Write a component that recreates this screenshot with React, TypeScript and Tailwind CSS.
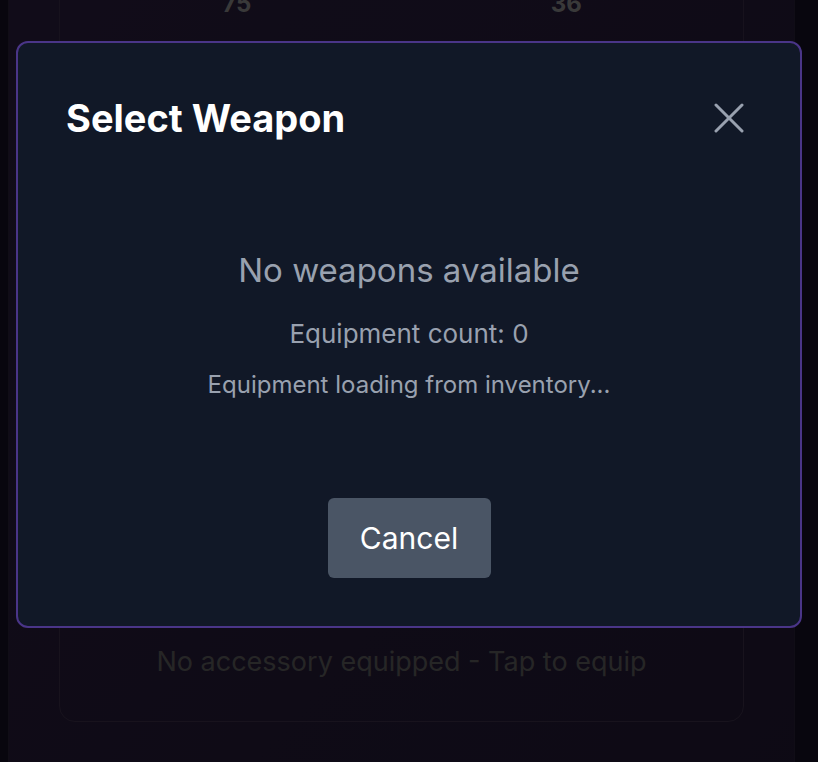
import React from 'react';

const font = { fontFamily: 'Inter, "Noto Sans", sans-serif' };

const Background = () => (
  <div className="min-h-screen bg-[#140f23] overflow-hidden" style={font}>
    <div className="ml-2 w-[787px] -mt-[40px] min-h-[900px] rounded-xl border border-[#2a2238] bg-gradient-to-br from-[#2c1f40] to-[#221a34] px-[50px]">
      <div className="grid grid-cols-2 border-x border-b border-[#3a2f4a] h-[120px] pt-[27px] px-[12px]">
        <div className="text-center text-2xl font-bold text-[#909090]">75</div>
        <div className="text-center text-2xl font-bold text-[#909090]">36</div>
      </div>
      <div className="mt-[481px] h-[160px] rounded-2xl border border-[#3c3049] flex justify-center pt-[81px]">
        <p className="text-[27px] leading-[36px] text-[#606060]">No accessory equipped - Tap to equip</p>
      </div>
    </div>
  </div>
);

const WeaponModal = () => (
  <div className="fixed inset-0 bg-black/60 px-4 pt-[41px]" style={font}>
    <div className="rounded-xl border-2 border-[#4a3588] bg-[#111827] p-12">
      <div className="flex h-[54px] items-center justify-between">
        <h2 className="text-[38px] leading-[44px] font-bold text-white">Select Weapon</h2>
        <button className="p-2 text-gray-400">
          <svg width="30" height="30" viewBox="0 0 30 30" fill="none" stroke="currentColor" strokeWidth="3" strokeLinecap="round">
            <line x1="2" y1="2" x2="28" y2="28" />
            <line x1="28" y1="2" x2="2" y2="28" />
          </svg>
        </button>
      </div>
      <div className="pt-[107px] flex flex-col items-center text-gray-400">
        <p className="text-[33px] leading-[36px]">No weapons available</p>
        <p className="mt-[30px] text-[26px] leading-[32px]">Equipment count: 0</p>
        <p className="mt-[21px] text-[24px] leading-[28px]">Equipment loading from inventory...</p>
        <button className="mt-[99px] h-[80px] w-[163px] rounded-md bg-gray-600 text-3xl text-white">
          Cancel
        </button>
      </div>
    </div>
  </div>
);

export default function App() {
  return (
    <div className="relative">
      <Background />
      <WeaponModal />
    </div>
  );
}
